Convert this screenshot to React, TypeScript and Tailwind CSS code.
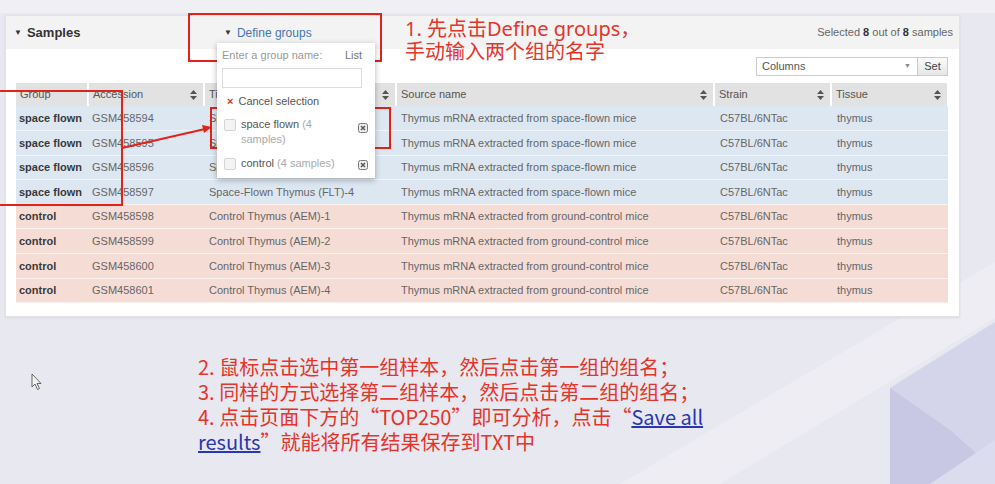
import React from "react";

const rows = [
  { g: "space flown", acc: "GSM458594", title: "Space-Flown Thymus (FLT)-1", src: "Thymus mRNA extracted from space-flown mice", tone: "blue" },
  { g: "space flown", acc: "GSM458595", title: "Space-Flown Thymus (FLT)-2", src: "Thymus mRNA extracted from space-flown mice", tone: "blue" },
  { g: "space flown", acc: "GSM458596", title: "Space-Flown Thymus (FLT)-3", src: "Thymus mRNA extracted from space-flown mice", tone: "blue" },
  { g: "space flown", acc: "GSM458597", title: "Space-Flown Thymus (FLT)-4", src: "Thymus mRNA extracted from space-flown mice", tone: "blue" },
  { g: "control", acc: "GSM458598", title: "Control Thymus (AEM)-1", src: "Thymus mRNA extracted from ground-control mice", tone: "pink" },
  { g: "control", acc: "GSM458599", title: "Control Thymus (AEM)-2", src: "Thymus mRNA extracted from ground-control mice", tone: "pink" },
  { g: "control", acc: "GSM458600", title: "Control Thymus (AEM)-3", src: "Thymus mRNA extracted from ground-control mice", tone: "pink" },
  { g: "control", acc: "GSM458601", title: "Control Thymus (AEM)-4", src: "Thymus mRNA extracted from ground-control mice", tone: "pink" },
];

const SortIcon = () => (
  <svg width="7" height="10" viewBox="0 0 7 10" className="shrink-0">
    <path d="M3.5 0 L7 4 L0 4 Z M3.5 10 L7 6 L0 6 Z" fill="#555" />
  </svg>
);

const RemoveIcon = () => (
  <svg width="10" height="10" viewBox="0 0 10 10">
    <rect x="0.5" y="0.5" width="9" height="9" rx="2" fill="#eee" stroke="#777" />
    <path d="M3 3 L7 7 M7 3 L3 7" stroke="#555" strokeWidth="1.4" />
  </svg>
);

const Check = () => <span className="mt-[2px] h-[12px] w-[12px] shrink-0 rounded-[2px] border border-[#d4d4d4] bg-[#f4f4f4]" />;

const Head = ({ label, sort = true, w }: { label: string; sort?: boolean; w: string }) => (
  <th className={`${w} h-[23px] border-r-2 border-white bg-[#e2e2e2] pl-[4px] pr-[6px] text-left font-normal`}>
    <div className="flex items-center justify-between">
      <span>{label}</span>
      {sort && <SortIcon />}
    </div>
  </th>
);

export default function App() {
  return (
    <div className="relative h-[484px] w-[995px] overflow-hidden bg-[#e8e8f0] font-['Liberation_Sans',Arial,sans-serif]">
      {/* background shapes */}
      <svg className="absolute inset-0" width="995" height="484" viewBox="0 0 995 484">
        <rect x="0" y="0" width="995" height="13" fill="#efeff4" />
        <polygon points="620,484 995,262 995,318 720,484" fill="#ffffff" opacity="0.22" />
        <polygon points="890,388 995,322 995,484 890,484" fill="#d4d4eb" />
        <polygon points="890,388 950,430 995,470 995,484 890,484" fill="#c8c8e5" />
        <polygon points="930,484 995,440 995,484" fill="#dcdcef" />
      </svg>

      <div className="relative flex flex-col">
        {/* samples panel */}
        <div className="ml-[5px] mt-[15px] w-[955px] border border-[#e3e3e3] bg-white pb-[13px] shadow-[0_1px_2px_rgba(0,0,0,0.08)]">
          <div className="flex h-[33px] items-center bg-[#f3f3f3] pl-[8px] pr-[6px] text-[#333]">
            <div className="flex w-[210px] items-center gap-[5px] text-[13px] font-bold">
              <span className="text-[8px]">▼</span>
              <span>Samples</span>
            </div>
            <div className="relative flex h-full items-center gap-[5px] text-[12px] text-[#4577ae]">
              <span className="text-[8px] text-[#333]">▼</span>
              <span>Define groups</span>
              {/* group popup */}
              <div className="absolute left-[-7px] top-[27px] z-10 w-[158px] bg-white px-[5px] pb-[7px] pt-[4px] text-[11px] text-[#666] shadow-[0_2px_6px_rgba(0,0,0,0.3)]">
                <div className="flex justify-between pr-[8px] text-[#999]">
                  <span>Enter a group name:</span>
                  <span className="text-[#777]">List</span>
                </div>
                <div className="mt-[4px] h-[20px] w-[140px] border border-[#ddd] bg-white" />
                <div className="mt-[5px] flex items-center gap-[5px] pl-[5px] text-[#555]">
                  <span className="text-[11px] font-bold text-[#c33]">×</span>
                  <span>Cancel selection</span>
                </div>
                <div className="mt-[8px] flex gap-[5px] pl-[2px]">
                  <Check />
                  <div className="w-[112px] leading-[15px] text-[#555]">
                    space flown <span className="text-[#aaa]">(4 samples)</span>
                  </div>
                  <div className="mt-[6px]"><RemoveIcon /></div>
                </div>
                <div className="mt-[9px] flex gap-[5px] pl-[2px]">
                  <Check />
                  <div className="w-[112px] leading-[15px] text-[#555]">
                    control <span className="text-[#aaa]">(4 samples)</span>
                  </div>
                  <div className="mt-[4px]"><RemoveIcon /></div>
                </div>
              </div>
            </div>
            <div className="flex-1" />
            <div className="text-[11px] text-[#666]">
              Selected <b className="text-[#333]">8</b> out of <b className="text-[#333]">8</b> samples
            </div>
          </div>

          <div className="flex h-[34px] items-center justify-end pr-[11px]">
            <div className="flex h-[19px] w-[162px] items-center justify-between border border-[#ccc] bg-white pl-[5px] pr-[6px] text-[11px] text-[#555]">
              <span>Columns</span>
              <span className="text-[7px] text-[#888]">▼</span>
            </div>
            <div className="flex h-[19px] w-[30px] items-center justify-center border border-l-0 border-[#ccc] bg-gradient-to-b from-[#fafafa] to-[#e6e6e6] text-[11px] text-[#444]">
              Set
            </div>
          </div>

          <table className="ml-[10px] w-[932px] table-fixed border-collapse text-[11px] text-[#666]">
            <thead>
              <tr className="text-[#555]">
                <Head label="Group" sort={false} w="w-[72px]" />
                <Head label="Accession" w="w-[116px]" />
                <Head label="Title" w="w-[192px]" />
                <Head label="Source name" w="w-[318px]" />
                <Head label="Strain" w="w-[117px]" />
                <Head label="Tissue" w="w-[117px]" />
              </tr>
            </thead>
            <tbody>
              {rows.map((r) => (
                <tr
                  key={r.acc}
                  className={`h-[24.6px] border-b border-white/60 ${r.tone === "blue" ? "bg-[#dde7f2]" : "bg-[#f5ddd6]"}`}
                >
                  <td className="whitespace-nowrap pl-[3px] font-bold text-[#3a3a3a]">{r.g}</td>
                  <td className="pl-[4px]">{r.acc}</td>
                  <td className="pl-[5px]">{r.title}</td>
                  <td className="pl-[5px]">{r.src}</td>
                  <td className="pl-[6px]">C57BL/6NTac</td>
                  <td className="pl-[6px]">thymus</td>
                </tr>
              ))}
            </tbody>
          </table>
        </div>

        {/* instructions */}
        <div className="ml-[198px] mt-[37px] font-['Noto_Sans_CJK_SC','Noto_Sans',sans-serif] text-[20px] leading-[25px] text-[#e5342a]">
          <div>2. 鼠标点击选中第一组样本，然后点击第一组的组名；</div>
          <div>3. 同样的方式选择第二组样本，然后点击第二组的组名；</div>
          <div>
            4. 点击页面下方的“TOP250”即可分析，点击“<span className="text-[#2a36b0] underline">Save all</span>
          </div>
          <div>
            <span className="text-[#2a36b0] underline">results</span>”就能将所有结果保存到TXT中
          </div>
        </div>
      </div>

      {/* annotations */}
      <div className="absolute left-[405px] top-[17px] font-['Noto_Sans','Noto_Sans_CJK_SC',sans-serif] text-[20px] leading-[23px] text-[#e5342a]">
        <div>1. 先点击Define groups，</div>
        <div>手动输入两个组的名字</div>
      </div>
      <div className="absolute left-[188px] top-[13px] h-[49px] w-[194px] border-[2.5px] border-[#e2231a]" />
      <div className="absolute left-[-4px] top-[90px] h-[116px] w-[127px] border-[2.5px] border-[#e2231a]" />
      <div className="absolute left-[210px] top-[107px] h-[42px] w-[181px] border-[2.5px] border-[#e2231a]" />
      <svg className="absolute left-0 top-0" width="260" height="200" viewBox="0 0 260 200">
        <line x1="122" y1="148" x2="205" y2="129" stroke="#e2231a" strokeWidth="2" />
        <polygon points="212,127 202,125 204,133" fill="#e2231a" />
      </svg>

      {/* mouse cursor */}
      <svg className="absolute left-[31px] top-[373px]" width="12" height="18" viewBox="0 0 12 18">
        <path d="M1 1 L1 14 L4 11 L6.5 16.5 L8.5 15.5 L6 10.5 L10 10.5 Z" fill="#f4f4f6" stroke="#666" strokeWidth="1" strokeLinejoin="round" />
      </svg>
    </div>
  );
}
